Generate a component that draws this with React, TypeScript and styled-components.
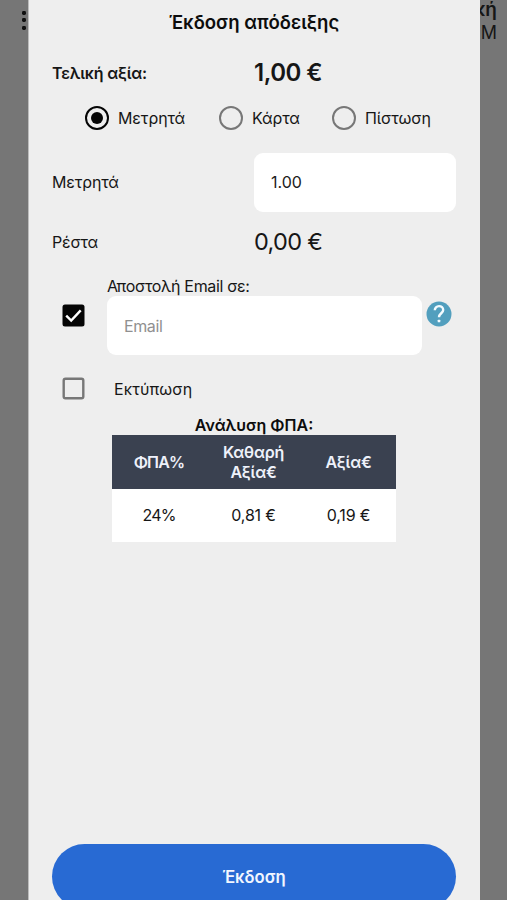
import React from "react";
import styled, { createGlobalStyle } from "styled-components";

const GlobalStyle = createGlobalStyle`
  * { box-sizing: border-box; }
  body { margin: 0; background: #767676; overflow: hidden; }
  input, button { font: inherit; letter-spacing: inherit; }
`;

const Screen = styled.div`
  display: grid;
  grid-template-columns: 28px 452px 27px;
  width: 507px;
  height: 900px;
  overflow: hidden;
  background: #767676;
  color: #161616;
  font-family: Inter, "Noto Sans", sans-serif;
  font-size: 16px;
  line-height: 20px;
`;

const LeftGutter = styled.div`
  display: flex;
  flex-direction: column;
  align-items: flex-end;
  gap: 3.4px;
  padding: 11px 2px 0 0;
`;

const Dot = styled.i`
  width: 4px;
  height: 4px;
  border-radius: 1.4px;
  background: #101010;
`;

const RightGutter = styled.div`
  display: flex;
  flex-direction: column;
  align-items: flex-end;
  overflow: hidden;
  padding-right: 10px;
  font-size: 18px;
  line-height: 23px;
  white-space: nowrap;
`;

const StoreName = styled.b`
  margin-top: -2px;
  font-size: 19px;
  font-weight: 600;
`;

const Sheet = styled.main`
  display: flex;
  flex-direction: column;
  height: 900px;
  padding: 0 24px 0 23px;
  background: #eeeeee;
  border-left: 1px solid #bcbcbc;
`;

const Title = styled.h1`
  margin: 0;
  height: 45px;
  font-size: 18.6px;
  font-weight: 600;
  line-height: 44px;
  text-align: center;
  color: #0c0c0c;
`;

const Row = styled.div<{ $height: number }>`
  display: grid;
  grid-template-columns: 202px 202px;
  align-items: center;
  height: ${(p) => p.$height}px;
`;

const Label = styled.span<{ $bold?: boolean; $tracking?: number }>`
  font-weight: ${(p) => (p.$bold ? 600 : 400)};
  letter-spacing: ${(p) => p.$tracking ?? 0}px;
`;

const Amount = styled.span<{ $bold?: boolean }>`
  position: relative;
  font-size: ${(p) => (p.$bold ? 24 : 23.5)}px;
  line-height: 28px;
  font-weight: ${(p) => (p.$bold ? 600 : 400)};
  letter-spacing: ${(p) => (p.$bold ? -0.5 : -0.7)}px;
`;

const Choices = styled.div`
  display: flex;
  height: 36px;
  padding-left: 33px;
  align-items: center;
`;

const Choice = styled.label<{ $width: number }>`
  display: flex;
  align-items: center;
  gap: 9px;
  width: ${(p) => p.$width}px;
  flex: none;
  letter-spacing: -0.1px;
`;

const Radio = styled.span<{ $checked?: boolean }>`
  display: grid;
  place-items: center;
  width: 24px;
  height: 24px;
  border: 2.5px solid ${(p) => (p.$checked ? "#050505" : "#777777")};
  border-radius: 50%;
  &::after {
    content: "";
    width: 12px;
    height: 12px;
    border-radius: 50%;
    background: ${(p) => (p.$checked ? "#050505" : "transparent")};
  }
`;

const Field = styled.input`
  display: block;
  width: 100%;
  height: 59px;
  padding: 0 17px;
  border: 0;
  border-radius: 9px;
  outline: 0;
  background: #ffffff;
  color: #202020;
  &::placeholder { color: #909090; opacity: 1; letter-spacing: -0.4px; }
`;

const EmailRow = styled.div`
  display: grid;
  grid-template-columns: 55px 315px 34px;
  height: 80px;
  margin-top: 20px;
`;

const CheckSlot = styled.div<{ $top?: number }>`
  padding: ${(p) => p.$top ?? 0}px 0 0 10px;
  line-height: 0;
`;

const HelpSlot = styled.div`
  padding: 25px 0 0 4px;
  line-height: 0;
`;

const PrintRow = styled.label`
  display: grid;
  grid-template-columns: 62px 1fr;
  align-items: center;
  height: 65px;
`;

const Breakdown = styled.table`
  width: 284px;
  margin: -6px auto 0 60px;
  border-collapse: collapse;
  table-layout: fixed;
  text-align: center;
  background: #ffffff;
  caption {
    height: 20px;
    font-weight: 600;
    color: #0c0c0c;
    background: #eeeeee;
  }
  th, td { height: 53.5px; padding: 0; letter-spacing: -0.2px; }
  th:first-child, td:first-child { letter-spacing: -0.8px; }
  th {
    background: #3a4150;
    color: #eef1fa;
    font-weight: 600;
  }
`;

const Submit = styled.button`
  flex: none;
  width: 404px;
  height: 65px;
  margin-top: auto;
  margin-bottom: -9px;
  border: 0;
  border-radius: 33px;
  background: #286ad3;
  color: #f2f7ff;
  font-size: 16.7px;
  font-weight: 600;
`;

function CheckBox({ checked }: { checked?: boolean }) {
  return (
    <svg width="23" height="23" viewBox="0 0 23 23" fill="none">
      {checked ? (
        <>
          <rect x="0.5" y="0.5" width="22" height="22" rx="2.5" fill="#050505" />
          <path d="m4.2 11.6 5 5L18.7 6.4" stroke="#ffffff" strokeWidth="2.4" />
        </>
      ) : (
        <rect x="1.7" y="1.7" width="19.6" height="19.6" rx="1.8" stroke="#777777" strokeWidth="2.4" />
      )}
    </svg>
  );
}

function HelpIcon() {
  return (
    <svg width="26" height="26" viewBox="0 0 26 26" fill="none">
      <circle cx="13" cy="13" r="12.5" fill="#529fbe" />
      <path
        d="M8.8 9.3c0-2.4 1.8-4.2 4.2-4.2s4.2 1.7 4.2 3.9c0 3.1-4.2 3.5-4.2 7.2"
        stroke="#f3fbff"
        strokeWidth="2.4"
      />
      <rect x="11.7" y="18.7" width="2.6" height="2.6" rx="0.6" fill="#f3fbff" />
    </svg>
  );
}

export default function App() {
  return (
    <>
      <GlobalStyle />
      <Screen>
        <LeftGutter>
          <Dot />
          <Dot />
          <Dot />
        </LeftGutter>
        <Sheet>
          <Title>Έκδοση απόδειξης</Title>
          <Row $height={55}>
            <Label $bold $tracking={-0.2}>Τελική αξία:</Label>
            <Amount $bold>1,00 €</Amount>
          </Row>
          <Choices>
            <Choice $width={134}><Radio $checked />Μετρητά</Choice>
            <Choice $width={113}><Radio />Κάρτα</Choice>
            <Choice $width={110}><Radio />Πίστωση</Choice>
          </Choices>
          <Row $height={92}>
            <Label $tracking={-0.15}>Μετρητά</Label>
            <Field defaultValue="1.00" />
          </Row>
          <Row $height={28}>
            <Label $tracking={-0.2}>Ρέστα</Label>
            <Amount>0,00 €</Amount>
          </Row>
          <EmailRow>
            <CheckSlot $top={28}><CheckBox checked /></CheckSlot>
            <div>
              <Label $tracking={-0.33}>Αποστολή Email σε:</Label>
              <Field placeholder="Email" />
            </div>
            <HelpSlot><HelpIcon /></HelpSlot>
          </EmailRow>
          <PrintRow>
            <CheckSlot><CheckBox /></CheckSlot>
            <Label $tracking={0.1}>Εκτύπωση</Label>
          </PrintRow>
          <Breakdown>
            <caption>Ανάλυση ΦΠΑ:</caption>
            <colgroup>
              <col width="94" />
              <col width="95" />
              <col width="95" />
            </colgroup>
            <thead>
              <tr>
                <th>ΦΠΑ%</th>
                <th>Καθαρή<br />Αξία€</th>
                <th>Αξία€</th>
              </tr>
            </thead>
            <tbody>
              <tr>
                <td>24%</td>
                <td>0,81 €</td>
                <td>0,19 €</td>
              </tr>
            </tbody>
          </Breakdown>
          <Submit>Έκδοση</Submit>
        </Sheet>
        <RightGutter>
          <StoreName>κή</StoreName>
          <span>M</span>
        </RightGutter>
      </Screen>
    </>
  );
}
